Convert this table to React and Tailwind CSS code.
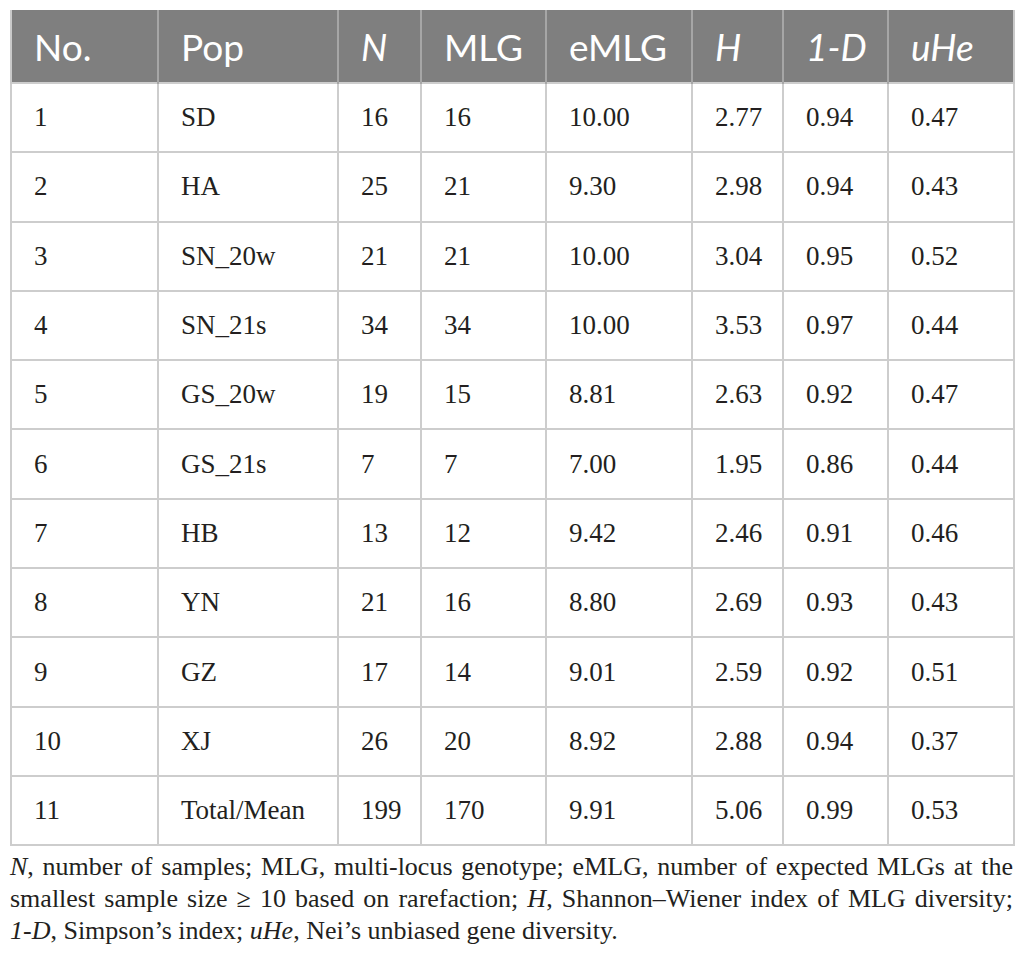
import React from "react";

const rows = [
  ["1", "SD", "16", "16", "10.00", "2.77", "0.94", "0.47"],
  ["2", "HA", "25", "21", "9.30", "2.98", "0.94", "0.43"],
  ["3", "SN_20w", "21", "21", "10.00", "3.04", "0.95", "0.52"],
  ["4", "SN_21s", "34", "34", "10.00", "3.53", "0.97", "0.44"],
  ["5", "GS_20w", "19", "15", "8.81", "2.63", "0.92", "0.47"],
  ["6", "GS_21s", "7", "7", "7.00", "1.95", "0.86", "0.44"],
  ["7", "HB", "13", "12", "9.42", "2.46", "0.91", "0.46"],
  ["8", "YN", "21", "16", "8.80", "2.69", "0.93", "0.43"],
  ["9", "GZ", "17", "14", "9.01", "2.59", "0.92", "0.51"],
  ["10", "XJ", "26", "20", "8.92", "2.88", "0.94", "0.37"],
  ["11", "Total/Mean", "199", "170", "9.91", "5.06", "0.99", "0.53"],
];

const headers = [
  { t: "No.", i: false },
  { t: "Pop", i: false },
  { t: "N", i: true },
  { t: "MLG", i: false },
  { t: "eMLG", i: false },
  { t: "H", i: true },
  { t: "1-D", i: true },
  { t: "uHe", i: true },
];

const widths = [147, 180, 83, 125, 146, 91, 105, 126];

export default function App() {
  return (
    <div className="w-[1025px] h-[969px] bg-white pt-[10px] pl-[10px] pr-[12px]">
      <table
        className="table-fixed border-collapse w-[1003px]"
        style={{ fontFamily: '"Liberation Serif", "DejaVu Serif", serif' }}
      >
        <colgroup>
          {widths.map((w, i) => (
            <col key={i} style={{ width: w }} />
          ))}
        </colgroup>
        <thead>
          <tr className="h-[73px] bg-[#7f7f7f]">
            {headers.map((h, i) => (
              <th
                key={i}
                className={`border-x-2 border-[#a6a6a6] first:border-l-[#c9c9c9] last:border-r-[#c9c9c9] text-left font-normal text-white text-[37px] pl-[22px] leading-none ${h.i ? "italic" : ""}`}
                style={{ fontFamily: 'Lato, "Open Sans", sans-serif' }}
              >
                {h.t}
              </th>
            ))}
          </tr>
        </thead>
        <tbody>
          {rows.map((r, ri) => (
            <tr key={ri} className="h-[69.3px]">
              {r.map((c, ci) => (
                <td
                  key={ci}
                  className="border-2 border-[#cdcdcd] pl-[22px] text-[27px] text-[#231f20] leading-none"
                >
                  {c}
                </td>
              ))}
            </tr>
          ))}
        </tbody>
      </table>
      <div
        className="mt-[5px] w-[1003px] text-[26px] leading-[32px] text-[#231f20]"
        style={{ fontFamily: '"Liberation Serif", "DejaVu Serif", serif' }}
      >
        <div className="whitespace-nowrap text-justify [text-align-last:justify]">
          <i>N</i>, number of samples; MLG, multi-locus genotype; eMLG, number of expected MLGs at the
        </div>
        <div className="whitespace-nowrap text-justify [text-align-last:justify]">
          smallest sample size ≥ 10 based on rarefaction; <i>H</i>, Shannon–Wiener index of MLG diversity;
        </div>
        <div className="whitespace-nowrap">
          <i>1-D</i>, Simpson’s index; <i>uHe</i>, Nei’s unbiased gene diversity.
        </div>
      </div>
    </div>
  );
}
